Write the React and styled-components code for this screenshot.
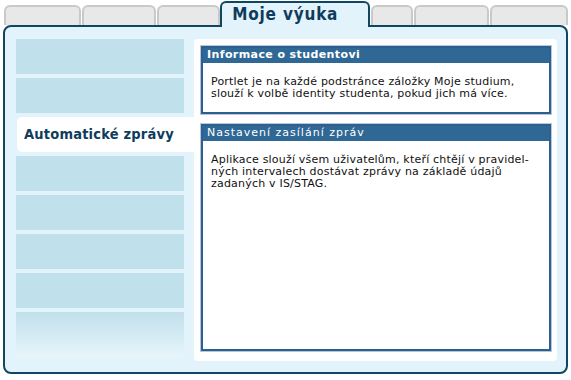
import React from 'react'
import styled, {createGlobalStyle} from 'styled-components'

const GlobalStyle = createGlobalStyle`
  body {
    margin: 0;
    background: #ffffff;
    font-family: "DejaVu Sans", Verdana, sans-serif;
  }
`

const tabs = [
  {width: 77},
  {width: 75},
  {width: 63},
  {label: 'Moje výuka', width: 150, active: true},
  {width: 42},
  {width: 76},
  {width: 78},
]

const menu = [
  {}, {}, {label: 'Automatické zprávy', active: true}, {}, {}, {}, {}, {last: true},
]

export default function App() {
  return (
    <Page>
      <GlobalStyle />
      <TabBar>
        {tabs.map((t, i) => (
          <Tab key={i} $active={t.active} style={{width: t.width}}>
            {t.label}
          </Tab>
        ))}
      </TabBar>
      <Panel>
        <Menu>
          {menu.map((m, i) =>
            m.active
              ? <ActiveItem key={i}>{m.label}</ActiveItem>
              : <MenuItem key={i} $last={m.last} />
          )}
        </Menu>
        <Content>
          <Portlet>
            <PortletHeader $bold>Informace o studentovi</PortletHeader>
            <PortletBody>
              Portlet je na každé podstránce záložky Moje studium,<br />
              slouží k volbě identity studenta, pokud jich má více.
            </PortletBody>
          </Portlet>
          <Portlet $grow>
            <PortletHeader>Nastavení zasílání zpráv</PortletHeader>
            <PortletBody>
              Aplikace slouží všem uživatelům, kteří chtějí v pravidel-<br />
              ných intervalech dostávat zprávy na základě údajů<br />
              zadaných v IS/STAG.
            </PortletBody>
          </Portlet>
        </Content>
      </Panel>
    </Page>
  )
}

const Page = styled.div`
  width: 565px;
  padding: 3px 0 0 3px;
`

const TabBar = styled.div`
  display: flex;
  align-items: flex-end;
  gap: 1px;
  padding-left: 1px;
  height: 24px;
  margin-bottom: -2px;
  position: relative;
  z-index: 2;
`

const Tab = styled.div`
  box-sizing: border-box;
  height: ${p => p.$active ? '26px' : '20px'};
  margin-bottom: ${p => p.$active ? '0' : '2px'};
  background: ${p => p.$active ? '#e3f3fb' : '#e8e8e8'};
  border: 2px solid ${p => p.$active ? '#0f4763' : '#c9c9c9'};
  border-bottom: none;
  border-radius: 6px 6px 0 0;
  color: #0f3c5c;
  font-family: "DejaVu Sans Condensed", "DejaVu Sans", sans-serif;
  font-stretch: condensed;
  font-weight: bold;
  font-size: 17px;
  letter-spacing: 0.8px;
  line-height: 22px;
  padding-left: 10px;
  white-space: nowrap;
  margin-left: ${p => p.$active ? '-1px' : '0'};
`

const Panel = styled.div`
  box-sizing: border-box;
  width: 565px;
  height: 349px;
  background: #e3f3fb;
  border: 2px solid #0f4763;
  border-radius: 8px;
  display: flex;
  padding: 12px 9px 11px 11px;
`

const Menu = styled.div`
  width: 178px;
  display: flex;
  flex-direction: column;
  gap: 4px;
`

const MenuItem = styled.div`
  width: 168px;
  height: ${p => p.$last ? '46px' : '35px'};
  background: ${p => p.$last
    ? 'linear-gradient(#c0e0ec, #e8f5fb)'
    : '#c0e0ec'};
`

const ActiveItem = styled.div`
  box-sizing: border-box;
  margin-left: 1px;
  height: 35px;
  background: #ffffff;
  border-radius: 5px 0 0 5px;
  color: #0f3c5c;
  font-family: "DejaVu Sans Condensed", "DejaVu Sans", sans-serif;
  font-stretch: condensed;
  font-weight: bold;
  font-size: 14.5px;
  letter-spacing: 0.2px;
  line-height: 35px;
  padding-left: 7px;
  white-space: nowrap;
`

const Content = styled.div`
  flex: 1;
  background: #ffffff;
  border-radius: 4px;
  padding: 7px 6px 10px 7px;
  display: flex;
  flex-direction: column;
  gap: 10px;
`

const Portlet = styled.div`
  display: flex;
  flex-direction: column;
  border: 2px solid #2d6091;
  box-shadow: 0 0 0 1px #b4c8da;
  flex: ${p => p.$grow ? '1' : 'none'};
  height: ${p => p.$grow ? 'auto' : '64px'};
`

const PortletHeader = styled.div`
  background: #2f6795;
  color: #ffffff;
  font-size: 11px;
  font-weight: ${p => p.$bold ? 'bold' : 'normal'};
  letter-spacing: ${p => p.$bold ? '0.4px' : '1px'};
  height: 15px;
  line-height: 14px;
  padding-left: 4px;
  white-space: nowrap;
`

const PortletBody = styled.div`
  background: #ffffff;
  color: #111111;
  font-size: 11px;
  letter-spacing: 0.2px;
  line-height: 12px;
  padding: 13px 8px 0 8px;
  white-space: nowrap;
`
